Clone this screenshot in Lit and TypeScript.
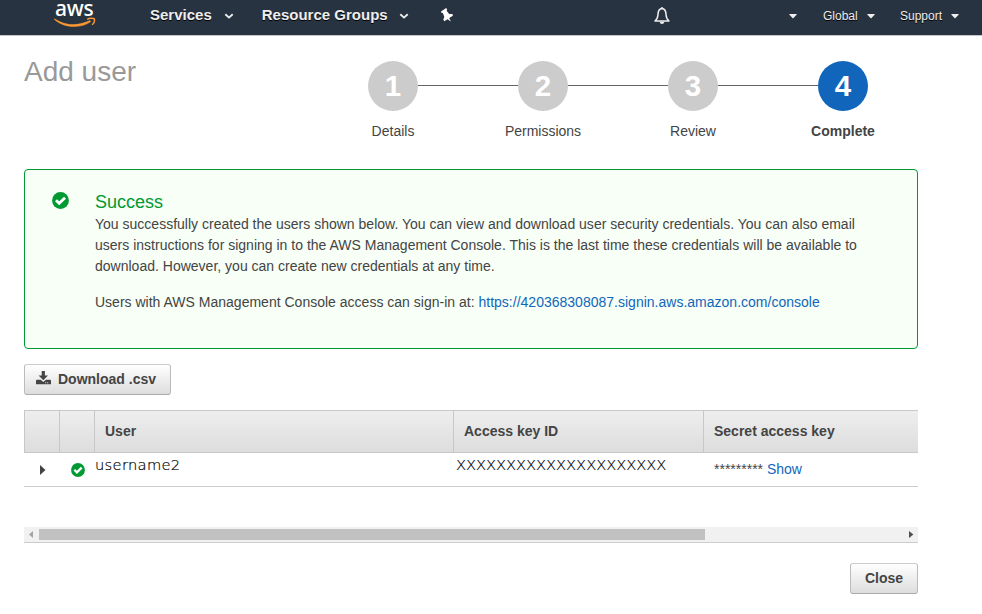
import { LitElement, html, css } from "lit";
import { customElement, property } from "lit/decorators.js";

const check = (size: number) => html`<svg width=${size} height=${size} viewBox="0 0 17 17">
  <circle cx="8.5" cy="8.5" r="8.4" fill="#093" />
  <path d="M4 8.2 7.2 11.3 13 5.7" fill="none" stroke="#fff" stroke-width="2.8" />
</svg>`;

@customElement("top-nav")
class TopNav extends LitElement {
  static styles = css`
    :host {
      display: flex;
      align-items: flex-start;
      height: 36px;
      background: #273340;
      border-bottom: 1px solid #c3c7cb;
      color: #eee;
      text-shadow: 0 1px 0 #000;
    }
    svg { display: block; flex: none; }
    .logo { margin-left: 52px; width: 46px; position: relative; height: 30px; }
    .word { display: block; padding-left: 3px; font: 500 21px/16px "Noto Sans", sans-serif; letter-spacing: -0.2px; color: #fff; text-shadow: none; }
    .smile { position: absolute; left: 0; top: 0; }
    .main { font: bold 15px/17px "Liberation Sans", Arial, sans-serif; margin-top: 6px; white-space: nowrap; }
    .small { font: 12px/14px "Liberation Sans", Arial, sans-serif; margin-top: 9px; white-space: nowrap; }
    .services { margin-left: 52px; width: 62px; }
    .groups { margin-left: 28.2px; width: 126px; }
    .chev { margin: 13px 0 0 11.6px; }
    .pin { margin: 7px 0 0 30.6px; }
    .bell { margin: 7px 0 0 200px; }
    .caret { margin: 14px 0 0 8px; }
    .account { margin-left: 119px; }
    .global { margin-left: 26px; width: 36px; }
    .support { margin-left: 25px; width: 43px; }
  `;
  private chev() {
    return html`<svg class="chev" width="10" height="7" viewBox="0 0 10 7"><path d="M1.3 1.3 5 4.6 8.7 1.3" fill="none" stroke="#eee" stroke-width="1.9" /></svg>`;
  }
  private caret(extra = "") {
    return html`<svg class="caret ${extra}" width="8" height="5" viewBox="0 0 8 5"><path d="M.4 0H7.6V.8L4 4.4.4.8Z" fill="#eee" /></svg>`;
  }
  render() {
    return html`
      <div class="logo">
        <span class="word">aws</span>
        <svg class="smile" width="46" height="30" viewBox="0 0 46 30">
          <path d="M2.4 18.8C10 23.4 16 24.8 22 24.6 28 24.4 33 22.6 38 20.6L38.8 21.6C30 28.2 13 28.8 2.4 19.4Z" fill="#f93" stroke="#f93" stroke-width=".5" stroke-linejoin="round" />
          <path d="M35.2 19.3C37.5 18 41 17.9 42.4 18.8 42.8 20.8 41.8 23.4 40 24.8" fill="none" stroke="#f93" stroke-width="1.4" />
        </svg>
      </div>
      <span class="main services">Services</span>${this.chev()}
      <span class="main groups">Resource Groups</span>${this.chev()}
      <svg class="pin" width="14" height="16" viewBox="0 0 14 16">
        <path d="M1 4.5 6.2 1 7.2 2.7 6.6 3.7 9.2 7 12.4 7.1 12.9 8.8 9.2 11.1 10.9 14.4 7.5 12.2 4.3 14.2 3.3 12.6 4.3 9.9 2.9 6 1.6 6Z" fill="#fff" />
      </svg>
      <svg class="bell" width="16" height="18" viewBox="0 0 16 18">
        <path d="M8 1.6C4.7 1.8 4.1 4.5 4 7.5 3.8 10.7 2.9 12.6 1 14H15C13.1 12.6 12.2 10.7 12 7.5 11.9 4.5 11.3 1.8 8 1.6Z" fill="none" stroke="#eee" stroke-width="1.5" stroke-linejoin="round" />
        <path d="M7 .2H9V2H7ZM5.5 14.7H10.5Q9.8 17 8 17T5.5 14.7Z" fill="#eee" />
      </svg>
      ${this.caret("account")}
      <span class="small global">Global</span>${this.caret()}
      <span class="small support">Support</span>${this.caret()}
    `;
  }
}

@customElement("wizard-steps")
class WizardSteps extends LitElement {
  @property({ type: Array }) steps: string[] = [];
  @property({ type: Number }) current = 4;
  static styles = css`
    :host { display: flex; width: 600px; }
    .step { flex: 1; display: flex; flex-direction: column; align-items: center; color: #444; font-size: 14px; line-height: 16px; }
    .track { display: flex; align-items: center; width: 100%; margin-bottom: 12px; }
    .line { flex: 1; height: 1px; background: #666; margin-top: -1px; }
    .hidden { visibility: hidden; }
    .dot { width: 50px; height: 50px; border-radius: 50%; background: #ccc; color: #fff; font-weight: bold; font-size: 29.5px; line-height: 50px; text-align: center; }
    .active { font-weight: bold; }
    .active .dot { background: #1166bb; }
  `;
  render() {
    return this.steps.map((s, i) => html`
      <div class="step ${i + 1 === this.current ? "active" : ""}">
        <div class="track">
          <div class="line ${i === 0 ? "hidden" : ""}"></div>
          <div class="dot">${i + 1}</div>
          <div class="line ${i === this.steps.length - 1 ? "hidden" : ""}"></div>
        </div>
        <span>${s}</span>
      </div>`);
  }
}

@customElement("app-root")
class AppRoot extends LitElement {
  static styles = css`
    * { box-sizing: border-box; }
    :host { display: block; height: 614px; overflow: hidden; background: #fff; color: #444; font: 14px/21px "Liberation Sans", Arial, sans-serif; }
    svg { display: block; }
    main { padding: 0 64px 0 24px; }
    .head { display: flex; height: 133px; }
    h1 { margin: 20px 0 0; width: 294px; flex: none; font-size: 28px; line-height: 32px; font-weight: normal; color: #999; }
    wizard-steps { margin-top: 25px; flex: none; }
    .panel { display: flex; height: 180px; border: 1px solid #093; border-radius: 4px; background: #f7fff7; padding: 21px 48px 0 27.4px; }
    .panel svg { margin: 1.4px 25.6px 0 0; flex: none; }
    h2 { margin: 0; font-size: 18px; line-height: 22px; font-weight: normal; color: #093; padding-bottom: 1px; }
    p { margin: 0 0 15px; letter-spacing: 0.007px; }
    .link { color: #16b; }
    .btn { display: inline-flex; align-items: center; height: 31px; border: 1px solid; border-color: #ccc #bbb #aaa #bbb; border-radius: 3px; background: linear-gradient(#fff, #ddd); color: #444; font: bold 14px/16px "Liberation Sans", Arial, sans-serif; padding: 0 14px 1px; }
    .download { margin: 15px 0; display: flex; width: 147px; padding: 0 0 1px 11.4px; gap: 6.6px; }
    .download svg { margin-top: -2px; }
    .grid { display: grid; grid-template-columns: 35px 35px 359px 250px 215px; }
    .th { height: 43px; border: solid #c8c8c8; border-width: 1px 0 1px 1px; background: linear-gradient(#eee, #ddd); padding-left: 10px; line-height: 41px; font-weight: bold; }
    .td { height: 34px; border-bottom: 1px solid #ccc; line-height: 33px; white-space: nowrap; }
    .arrow { padding: 12px 0 0 16px; }
    .ok { padding: 10px 0 0 12px; }
    .plain { font-family: "DejaVu Sans Light", "DejaVu Sans", sans-serif; font-weight: 200; font-size: 14.67px; line-height: 23px; color: #000; -webkit-text-stroke: 0.2px #000; }
    .name { padding-left: 1px; letter-spacing: 0.32px; }
    .key { padding-left: 3px; letter-spacing: -0.03px; }
    .secret { padding-left: 11px; }
    .scroll { display: flex; align-items: flex-start; margin-top: 40px; height: 16px; background: #f1f1f1; border-bottom: 1px solid #ccc; padding-top: 2px; }
    .thumb { width: 666px; height: 11px; background: #c1c1c1; }
    .left { margin: 2px 5px 0 5px; }
    .right { margin: 2px 4px 0 auto; }
    footer { display: flex; justify-content: flex-end; margin-top: 20px; }
  `;
  render() {
    return html`
      <top-nav></top-nav>
      <main>
        <div class="head">
          <h1>Add user</h1>
          <wizard-steps .steps=${["Details", "Permissions", "Review", "Complete"]} .current=${4}></wizard-steps>
        </div>
        <section class="panel">
          ${check(17)}
          <div>
            <h2>Success</h2>
            <p>You successfully created the users shown below. You can view and download user security credentials. You can also email users instructions for signing in to the AWS Management Console. This is the last time these credentials will be available to download. However, you can create new credentials at any time.</p>
            <p>Users with AWS Management Console access can sign-in at: <span class="link">https://420368308087.signin.aws.amazon.com/console</span></p>
          </div>
        </section>
        <button class="btn download">
          <svg width="15" height="15" viewBox="0 0 15 15" fill="#444">
            <path d="M5.7 0H8.9V4.4H12L7.3 9.2 2.6 4.4H5.7Z" />
            <path fill-rule="evenodd" d="M.8 8.7H4.6L7.3 11 10 8.7H14.2L15 9.5V13.2H0V9.5ZM9.2 11.2V12.2H10.2V11.2ZM11.2 11.2V12.2H12.2V11.2Z" />
          </svg>
          Download .csv
        </button>
        <div class="grid">
          <div class="th"></div><div class="th"></div>
          <div class="th">User</div><div class="th">Access key ID</div><div class="th">Secret access key</div>
          <div class="td arrow"><svg width="6" height="10" viewBox="0 0 6 10"><path d="M0 0 5.5 5 0 10Z" fill="#444" /></svg></div>
          <div class="td ok">${check(14)}</div>
          <div class="td plain name">username2</div>
          <div class="td plain key">XXXXXXXXXXXXXXXXXXXXX</div>
          <div class="td secret">********* <span class="link">Show</span></div>
        </div>
        <div class="scroll">
          <svg class="left" width="5" height="7" viewBox="0 0 5 7"><path d="M4 0V7L0 3.5Z" fill="#a3a3a3" /></svg>
          <div class="thumb"></div>
          <svg class="right" width="5" height="7" viewBox="0 0 5 7"><path d="M0 0V7L4.4 3.5Z" fill="#505050" /></svg>
        </div>
        <footer><button class="btn">Close</button></footer>
      </main>
    `;
  }
}
